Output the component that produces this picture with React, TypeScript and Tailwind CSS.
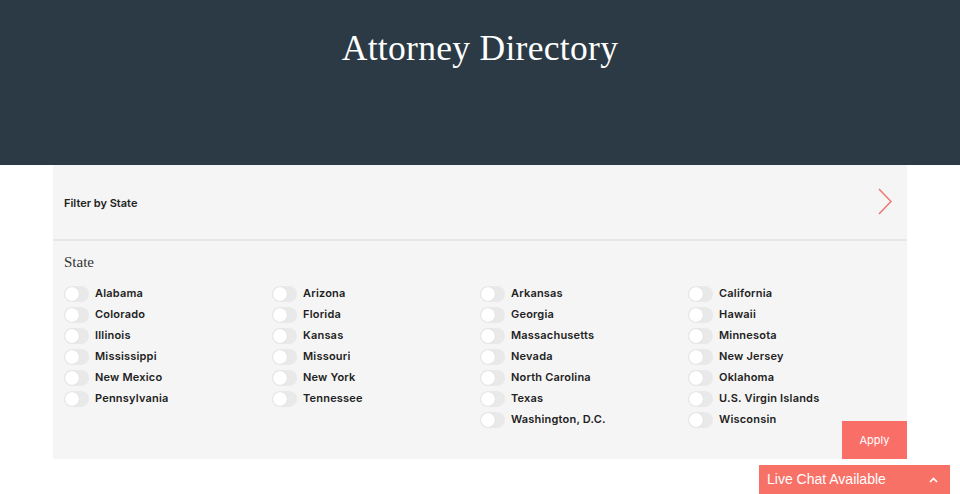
import React from 'react';

const columns: string[][] = [
  ['Alabama', 'Colorado', 'Illinois', 'Mississippi', 'New Mexico', 'Pennsylvania'],
  ['Arizona', 'Florida', 'Kansas', 'Missouri', 'New York', 'Tennessee'],
  ['Arkansas', 'Georgia', 'Massachusetts', 'Nevada', 'North Carolina', 'Texas', 'Washington, D.C.'],
  ['California', 'Hawaii', 'Minnesota', 'New Jersey', 'Oklahoma', 'U.S. Virgin Islands', 'Wisconsin'],
];

function Toggle() {
  return (
    <span className="relative inline-block w-[25px] h-[16px] rounded-full bg-[#e9e9e9] shrink-0">
      <span className="absolute left-[1px] top-[1px] w-[14px] h-[14px] rounded-full bg-white shadow-[0_0_1px_rgba(0,0,0,0.15)]" />
    </span>
  );
}

export default function App() {
  return (
    <div className="w-[960px] h-[494px] bg-white overflow-hidden relative font-['Inter',sans-serif]">
      <header className="h-[165px] bg-[#2b3a44] flex justify-center pt-[28px]">
        <h1 className="text-white text-[35.5px] leading-[40px] font-['Liberation_Serif',serif] tracking-[0.3px]">
          Attorney Directory
        </h1>
      </header>

      <div className="mx-[53px] bg-[#f5f5f5]">
        <div className="h-[76px] flex items-center justify-between pl-[11px] pr-[14px] border-b-2 border-[#e8e8e8]">
          <span className="text-[11px] font-semibold text-[#222] pt-[2px]">Filter by State</span>
          <svg width="16" height="28" viewBox="0 0 16 28" fill="none">
            <path d="M2 1 L14 13.5 L2 26" stroke="#f0736a" strokeWidth="1.4" />
          </svg>
        </div>

        <div className="px-[11px] pt-[11px]">
          <div className="text-[15px] text-[#333] font-['Liberation_Serif',serif] leading-[20px]">State</div>
          <div className="grid grid-cols-4 mt-[11px]">
            {columns.map((col, i) => (
              <div key={i} className="flex flex-col">
                {col.map(name => (
                  <div key={name} className="flex items-center gap-[6px] h-[21px]">
                    <Toggle />
                    <span className="text-[11px] font-semibold text-[#222] tracking-[0.2px]">{name}</span>
                  </div>
                ))}
              </div>
            ))}
          </div>
          <div className="flex justify-end -mt-[9px] -mr-[11px]">
            <button className="w-[65px] h-[38px] bg-[#fa6e68] text-white text-[11px]">Apply</button>
          </div>
        </div>
      </div>

      <div className="absolute left-[759px] top-[465px] w-[191px] h-[29px] bg-[#f87167] flex items-center justify-between pl-[8px] pr-[12px]">
        <span className="text-white text-[14px] font-['Liberation_Sans',sans-serif]">Live Chat Available</span>
        <svg width="9" height="6" viewBox="0 0 9 6" fill="none">
          <path d="M1 5 L4.5 1.5 L8 5" stroke="white" strokeWidth="1.6" />
        </svg>
      </div>
    </div>
  );
}
